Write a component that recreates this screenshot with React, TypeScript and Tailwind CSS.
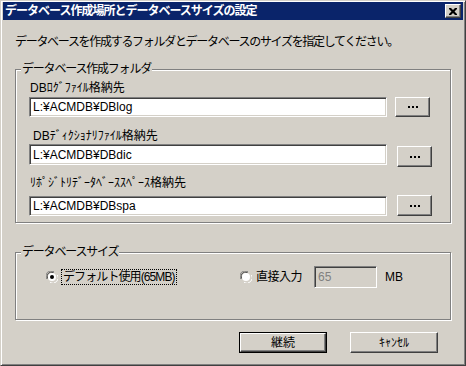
import React from 'react';

const FONT = { fontFamily: '"Liberation Sans", "Noto Sans CJK JP", sans-serif' };

const Sunken: React.FC<{ className?: string; children?: React.ReactNode; disabled?: boolean }> = ({ className = '', children, disabled }) => (
  <div
    className={`flex items-center border border-t-[#808080] border-l-[#808080] border-r-white border-b-white shadow-[inset_1px_1px_0_#404040,inset_-1px_-1px_0_#d4d0c8] pl-[3px] text-[12px] leading-[14px] ${
      disabled ? 'bg-[#d4d0c8] text-[#808080]' : 'bg-white text-black'
    } ${className}`}
  >
    {children}
  </div>
);

const Raised: React.FC<{ className?: string; children?: React.ReactNode; isDefault?: boolean }> = ({ className = '', children, isDefault }) => {
  const inner = (
    <div className="flex h-full w-full items-center justify-center border border-t-white border-l-white border-r-[#404040] border-b-[#404040] shadow-[inset_-1px_-1px_0_#808080] bg-[#d4d0c8] text-[12px] text-black">
      {children}
    </div>
  );
  if (isDefault) {
    return <div className={`border border-black ${className}`}>{inner}</div>;
  }
  return <div className={className}>{inner}</div>;
};

const Radio: React.FC<{ checked?: boolean }> = ({ checked }) => (
  <svg width="12" height="12" viewBox="0 0 12 12" className="shrink-0">
    <path d="M0.5 8 A5.5 5.5 0 0 1 8 0.5" fill="none" stroke="#808080" />
    <path d="M1.5 7.5 A4.5 4.5 0 0 1 7.5 1.5" fill="none" stroke="#404040" />
    <path d="M4 11.5 A5.5 5.5 0 0 0 11.5 4" fill="none" stroke="#ffffff" />
    <path d="M4.5 10.5 A4.5 4.5 0 0 0 10.5 4.5" fill="none" stroke="#d4d0c8" />
    <circle cx="6" cy="6" r="4" fill="#ffffff" />
    {checked && <circle cx="6" cy="6" r="2" fill="#000000" />}
  </svg>
);

// the "..." browse glyph: three small square dots
const Dots = () => (
  <svg width="10" height="2" viewBox="0 0 10 2">
    <rect x="0" y="0" width="2" height="2" fill="#000" />
    <rect x="4" y="0" width="2" height="2" fill="#000" />
    <rect x="8" y="0" width="2" height="2" fill="#000" />
  </svg>
);

const GroupBox: React.FC<{ title: string; className?: string; children: React.ReactNode }> = ({ title, className = '', children }) => (
  <fieldset className={`border border-[#808080] shadow-[inset_1px_1px_0_#fff,1px_1px_0_#fff] ${className}`}>
    <legend className="ml-[5px] bg-[#d4d0c8] px-[1px] text-[12px] leading-[16px] tracking-[-1.2px]">{title}</legend>
    {children}
  </fieldset>
);

export default function App() {
  return (
    <div
      style={FONT}
      className="flex h-[366px] w-[466px] flex-col border border-t-[#d4d0c8] border-l-[#d4d0c8] border-r-[#404040] border-b-[#404040] bg-[#d4d0c8] px-[2px] pt-[1px] pb-[2px] text-black shadow-[inset_1px_1px_0_#fff,inset_-1px_-1px_0_#808080]"
    >
      <div className="flex h-[18px] items-center justify-between bg-[#0a246a] pl-[2px] pr-[2px]">
        <span className="text-[12px] font-bold leading-[16px] tracking-[-1px] text-white">
          データベース作成場所とデータベースサイズの設定
        </span>
        <Raised className="h-[14px] w-[16px]">
          <svg width="8" height="7" viewBox="0 0 8 7">
            <path d="M0 0h2l2 2l2-2h2v1l-2.5 2.5l2.5 2.5v1h-2l-2-2l-2 2h-2v-1l2.5-2.5l-2.5-2.5z" fill="#000" />
          </svg>
        </Raised>
      </div>

      <div className="flex flex-col px-[12px]">
        <p className="mt-[14px] text-[12px] leading-[16px] tracking-[-1.3px]">
          データベースを作成するフォルダとデータベースのサイズを指定してください。
        </p>

        <GroupBox title="データベース作成フォルダ" className="mt-[11px] h-[162px] w-[436px]">
          <div className="pl-[13px]">
            <div className="mt-[3px] ml-[1px] text-[12px] leading-[16px]">DBﾛｸﾞﾌｧｲﾙ格納先</div>
            <div className="mt-[1px] flex items-center gap-[8px]">
              <Sunken className="h-[20px] w-[358px]">L:¥ACMDB¥DBlog</Sunken>
              <Raised className="h-[20px] w-[35px]"><Dots /></Raised>
            </div>

            <div className="mt-[11px] ml-[4px] text-[12px] leading-[16px]">DBﾃﾞｨｸｼｮﾅﾘﾌｧｲﾙ格納先</div>
            <div className="flex items-start gap-[10px]">
              <Sunken className="h-[21px] w-[358px]">L:¥ACMDB¥DBdic</Sunken>
              <Raised className="mt-[2px] h-[21px] w-[35px]"><Dots /></Raised>
            </div>

            <div className="mt-[8px] ml-[1px] text-[12px] leading-[16px]">ﾘﾎﾟｼﾞﾄﾘﾃﾞｰﾀﾍﾞｰｽｽﾍﾟｰｽ格納先</div>
            <div className="mt-[4px] flex items-center gap-[10px]">
              <Sunken className="h-[20px] w-[358px]">L:¥ACMDB¥DBspa</Sunken>
              <Raised className="h-[21px] w-[35px]"><Dots /></Raised>
            </div>
          </div>
        </GroupBox>

        <GroupBox title="データベースサイズ" className="mt-[21px] h-[76px] w-[436px]">
          <div className="mt-[6px] flex items-center">
            <div className="ml-[30px] flex w-[194px] items-center">
              <Radio checked />
              <span className="ml-[3px] border border-dotted border-black px-[1px] text-[12px] leading-[14px] tracking-[-0.9px]">
                デフォルト使用(65MB)
              </span>
            </div>
            <div className="flex items-center">
              <Radio />
              <span className="ml-[4px] text-[12px] leading-[16px] tracking-[-0.5px]">直接入力</span>
            </div>
            <Sunken disabled className="ml-[12px] h-[22px] w-[63px]">65</Sunken>
            <span className="ml-[8px] text-[12px] leading-[16px]">MB</span>
          </div>
        </GroupBox>

        <div className="mt-[12px] flex gap-[23px] pl-[224px]">
          <Raised isDefault className="h-[21px] w-[88px]">継続</Raised>
          <Raised className="h-[21px] w-[88px]">ｷｬﾝｾﾙ</Raised>
        </div>
      </div>
    </div>
  );
}
